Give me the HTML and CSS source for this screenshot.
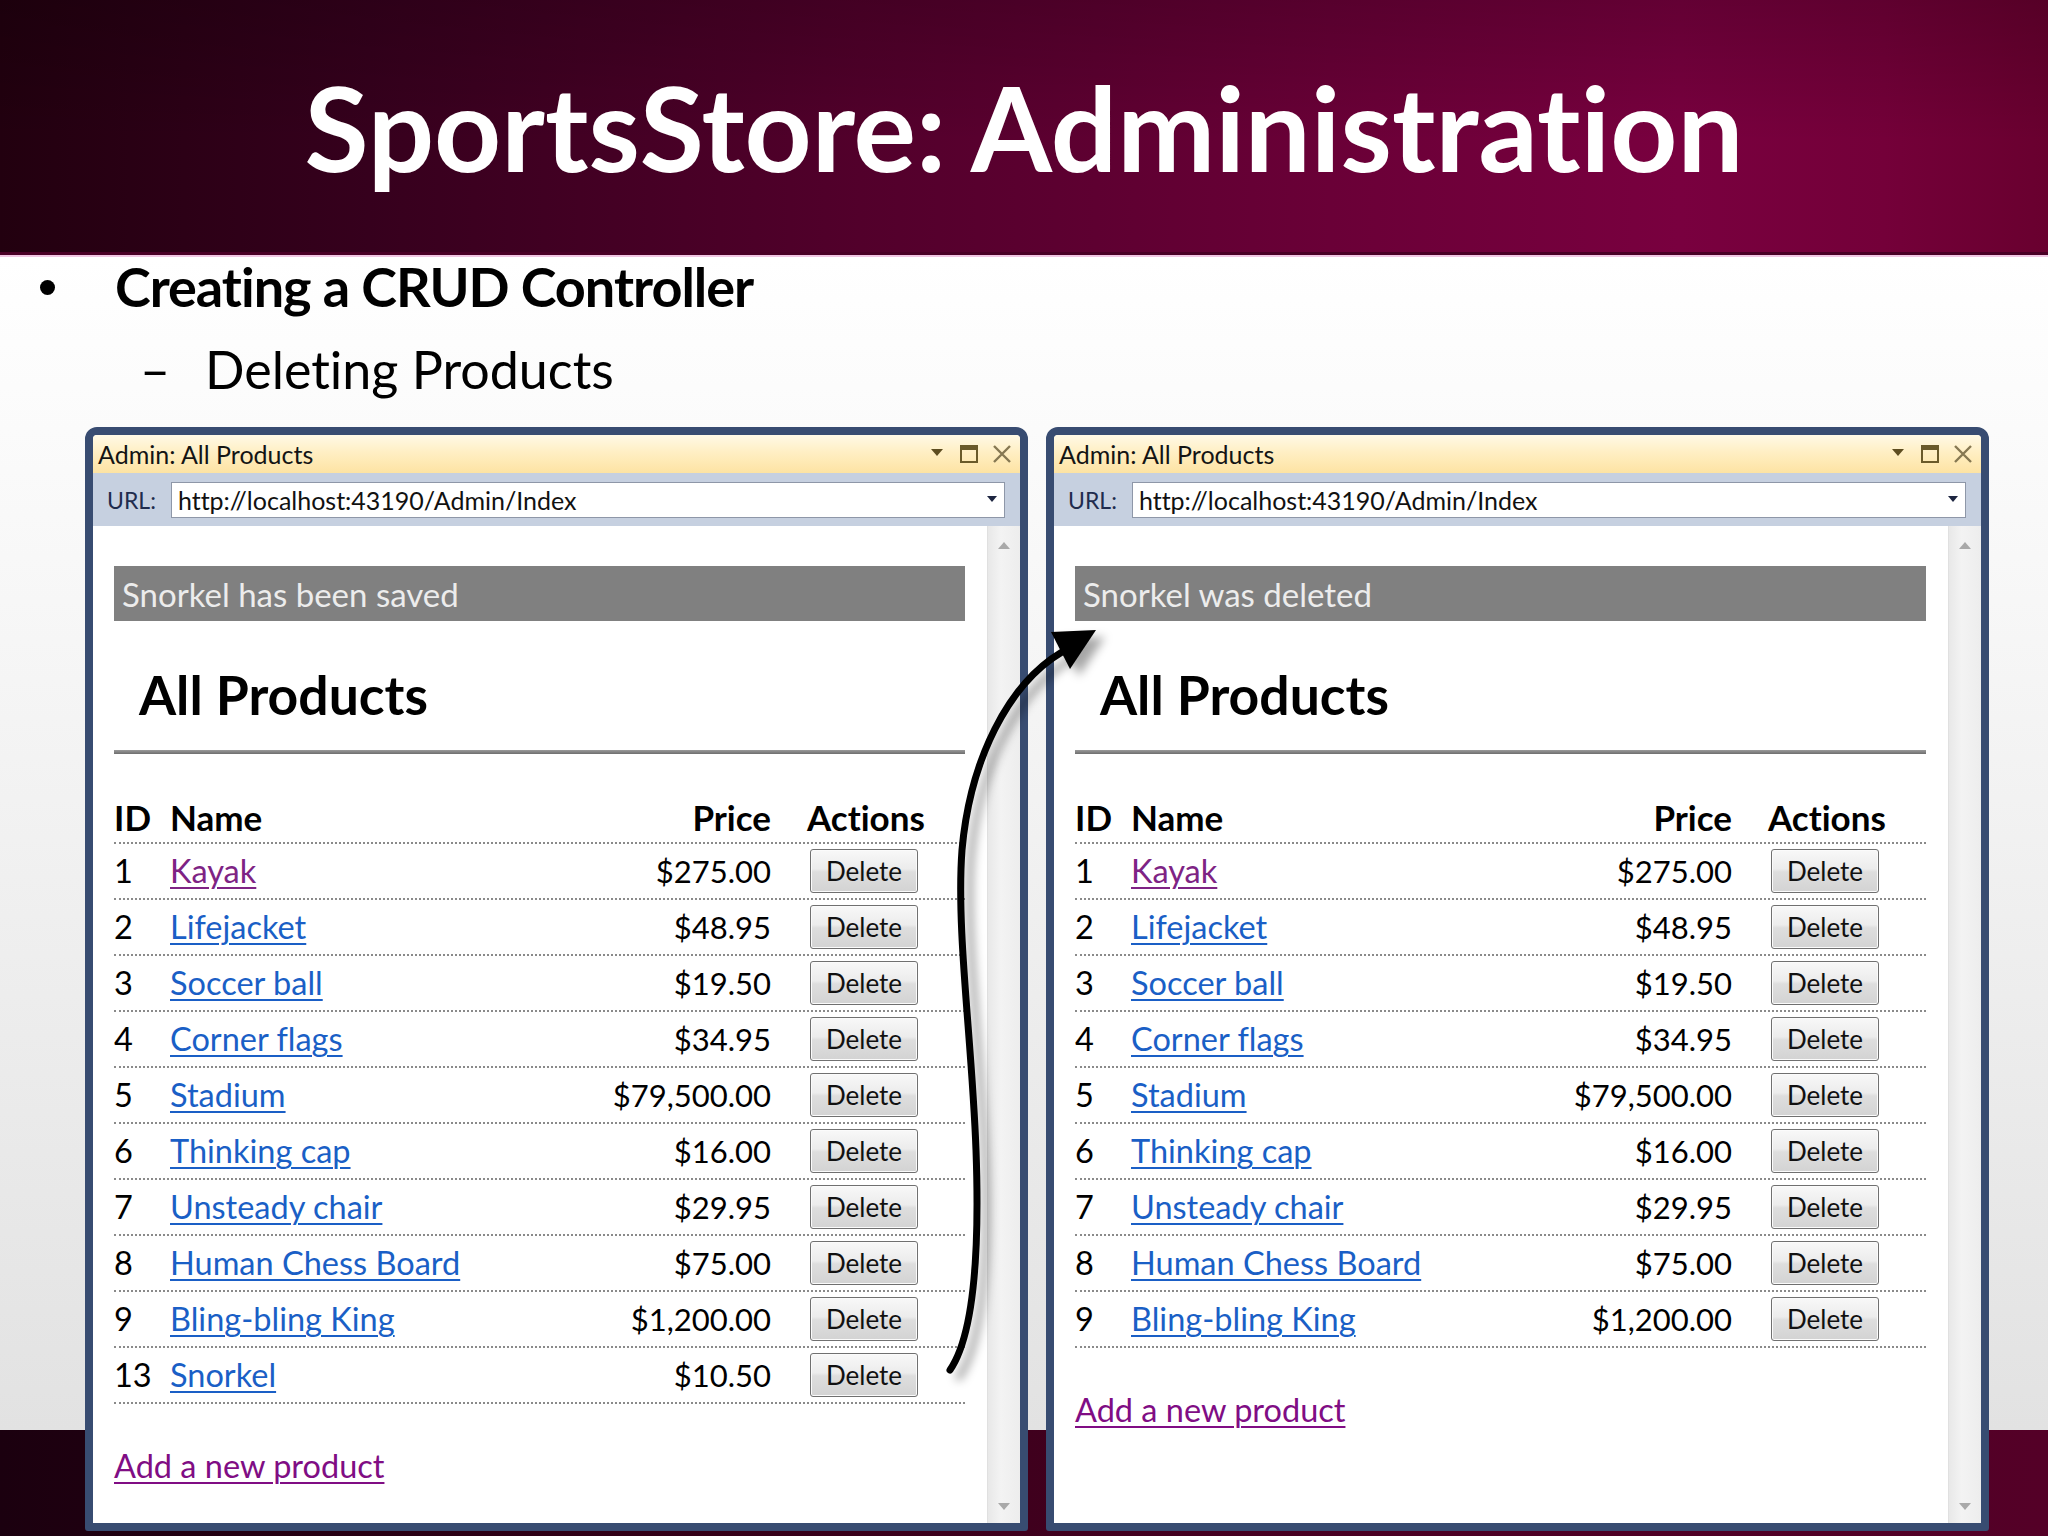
FILE: index.html
```html
<!DOCTYPE html>
<html lang="en">
<head>
<meta charset="utf-8">
<title>SportsStore: Administration</title>
<link rel="stylesheet" href="styles.css">
</head>
<body>
<header class="header"><h1 class="title">SportsStore: Administration</h1></header>

<div class="bullets">
  <div class="b1"><span class="dot"></span><span>Creating a CRUD Controller</span></div>
  <div class="b2"><span class="dash">–</span><span>Deleting Products</span></div>
</div>

<div class="windows">
  <section class="window">
    <div class="titlebar">
      <span class="wtitle">Admin: All Products</span>
      <span class="wicons">
        <svg class="ic-down" width="12" height="8" viewBox="0 0 12 8"><polygon points="0,0 12,0 6,7" fill="#5e4d20"/></svg>
        <svg class="ic-max" width="18" height="18" viewBox="0 0 18 18"><rect x="1" y="1" width="16" height="16" fill="none" stroke="#6a5a2a" stroke-width="2"/><rect x="1" y="1" width="16" height="4" fill="#6a5a2a"/></svg>
        <svg class="ic-close" width="20" height="18" viewBox="0 0 20 18"><path d="M2 1 L18 17 M18 1 L2 17" stroke="#867852" stroke-width="2.4" fill="none"/></svg>
      </span>
    </div>
    <div class="urlbar">
      <span class="urllabel">URL:</span>
      <div class="urlbox"><span class="urltext">http://localhost:43190/Admin/Index</span><svg width="10" height="7" viewBox="0 0 10 7"><polygon points="0,0 10,0 5,6" fill="#1d2541"/></svg></div>
    </div>
    <div class="viewport">
      <div class="page">
        <div class="msg">Snorkel has been saved</div>
        <h2 class="ptitle">All Products</h2>
        <div class="rule"></div>
        <div class="grid">
          <div class="tr th"><span>ID</span><span>Name</span><span class="num">Price</span><span class="act">Actions</span></div>
          <div class="tr"><span>1</span><span><a class="lnk visited" href="#">Kayak</a></span><span class="num">$275.00</span><span><button class="del">Delete</button></span></div>
          <div class="tr"><span>2</span><span><a class="lnk" href="#">Lifejacket</a></span><span class="num">$48.95</span><span><button class="del">Delete</button></span></div>
          <div class="tr"><span>3</span><span><a class="lnk" href="#">Soccer ball</a></span><span class="num">$19.50</span><span><button class="del">Delete</button></span></div>
          <div class="tr"><span>4</span><span><a class="lnk" href="#">Corner flags</a></span><span class="num">$34.95</span><span><button class="del">Delete</button></span></div>
          <div class="tr"><span>5</span><span><a class="lnk" href="#">Stadium</a></span><span class="num">$79,500.00</span><span><button class="del">Delete</button></span></div>
          <div class="tr"><span>6</span><span><a class="lnk" href="#">Thinking cap</a></span><span class="num">$16.00</span><span><button class="del">Delete</button></span></div>
          <div class="tr"><span>7</span><span><a class="lnk" href="#">Unsteady chair</a></span><span class="num">$29.95</span><span><button class="del">Delete</button></span></div>
          <div class="tr"><span>8</span><span><a class="lnk" href="#">Human Chess Board</a></span><span class="num">$75.00</span><span><button class="del">Delete</button></span></div>
          <div class="tr"><span>9</span><span><a class="lnk" href="#">Bling-bling King</a></span><span class="num">$1,200.00</span><span><button class="del">Delete</button></span></div>
          <div class="tr"><span>13</span><span><a class="lnk" href="#">Snorkel</a></span><span class="num">$10.50</span><span><button class="del">Delete</button></span></div>
        </div>
        <a class="addlink" href="#">Add a new product</a>
      </div>
      <div class="scrollbar">
        <svg width="12" height="7" viewBox="0 0 12 7"><polygon points="0,7 12,7 6,0" fill="#a9a9a9"/></svg>
        <svg width="12" height="7" viewBox="0 0 12 7"><polygon points="0,0 12,0 6,7" fill="#a9a9a9"/></svg>
      </div>
    </div>
  </section>

  <section class="window">
    <div class="titlebar">
      <span class="wtitle">Admin: All Products</span>
      <span class="wicons">
        <svg class="ic-down" width="12" height="8" viewBox="0 0 12 8"><polygon points="0,0 12,0 6,7" fill="#5e4d20"/></svg>
        <svg class="ic-max" width="18" height="18" viewBox="0 0 18 18"><rect x="1" y="1" width="16" height="16" fill="none" stroke="#6a5a2a" stroke-width="2"/><rect x="1" y="1" width="16" height="4" fill="#6a5a2a"/></svg>
        <svg class="ic-close" width="20" height="18" viewBox="0 0 20 18"><path d="M2 1 L18 17 M18 1 L2 17" stroke="#867852" stroke-width="2.4" fill="none"/></svg>
      </span>
    </div>
    <div class="urlbar">
      <span class="urllabel">URL:</span>
      <div class="urlbox"><span class="urltext">http://localhost:43190/Admin/Index</span><svg width="10" height="7" viewBox="0 0 10 7"><polygon points="0,0 10,0 5,6" fill="#1d2541"/></svg></div>
    </div>
    <div class="viewport">
      <div class="page">
        <div class="msg">Snorkel was deleted</div>
        <h2 class="ptitle">All Products</h2>
        <div class="rule"></div>
        <div class="grid">
          <div class="tr th"><span>ID</span><span>Name</span><span class="num">Price</span><span class="act">Actions</span></div>
          <div class="tr"><span>1</span><span><a class="lnk visited" href="#">Kayak</a></span><span class="num">$275.00</span><span><button class="del">Delete</button></span></div>
          <div class="tr"><span>2</span><span><a class="lnk" href="#">Lifejacket</a></span><span class="num">$48.95</span><span><button class="del">Delete</button></span></div>
          <div class="tr"><span>3</span><span><a class="lnk" href="#">Soccer ball</a></span><span class="num">$19.50</span><span><button class="del">Delete</button></span></div>
          <div class="tr"><span>4</span><span><a class="lnk" href="#">Corner flags</a></span><span class="num">$34.95</span><span><button class="del">Delete</button></span></div>
          <div class="tr"><span>5</span><span><a class="lnk" href="#">Stadium</a></span><span class="num">$79,500.00</span><span><button class="del">Delete</button></span></div>
          <div class="tr"><span>6</span><span><a class="lnk" href="#">Thinking cap</a></span><span class="num">$16.00</span><span><button class="del">Delete</button></span></div>
          <div class="tr"><span>7</span><span><a class="lnk" href="#">Unsteady chair</a></span><span class="num">$29.95</span><span><button class="del">Delete</button></span></div>
          <div class="tr"><span>8</span><span><a class="lnk" href="#">Human Chess Board</a></span><span class="num">$75.00</span><span><button class="del">Delete</button></span></div>
          <div class="tr"><span>9</span><span><a class="lnk" href="#">Bling-bling King</a></span><span class="num">$1,200.00</span><span><button class="del">Delete</button></span></div>
        </div>
        <a class="addlink" href="#">Add a new product</a>
      </div>
      <div class="scrollbar">
        <svg width="12" height="7" viewBox="0 0 12 7"><polygon points="0,7 12,7 6,0" fill="#a9a9a9"/></svg>
        <svg width="12" height="7" viewBox="0 0 12 7"><polygon points="0,0 12,0 6,7" fill="#a9a9a9"/></svg>
      </div>
    </div>
  </section>
</div>

<svg class="arrow" width="2048" height="1536" viewBox="0 0 2048 1536">
  <defs>
    <filter id="shadow" x="-50%" y="-10%" width="200%" height="120%">
      <feDropShadow dx="9" dy="7" stdDeviation="5" flood-color="#000" flood-opacity="0.35"/>
    </filter>
  </defs>
  <g filter="url(#shadow)">
    <path d="M950 1370 C972 1338, 980 1260, 976 1150 C972 1040, 956 930, 962 850 C970 760, 1008 684, 1062 652" fill="none" stroke="#000" stroke-width="7" stroke-linecap="round"/>
    <polygon points="1096,630 1051,632 1070,669" fill="#000"/>
  </g>
</svg>
</body>
</html>
```

FILE: styles.css
```css
* { box-sizing: border-box; }
html, body { margin: 0; padding: 0; }

body {
  width: 2048px;
  height: 1536px;
  overflow: hidden;
  position: relative;
  font-family: Lato, "Open Sans", "Liberation Sans", sans-serif;
  font-variant-ligatures: none;
  color: #000;
  background:
    linear-gradient(to right, #1b000f 0%, #350018 35%, #4c0024 70%, #540027 100%) left bottom / 100% 106px no-repeat,
    linear-gradient(#ffffff 257px, #f7f7f7 600px, #e2e2e2 1430px);
}

/* ---------- slide header ---------- */
.header {
  height: 257px;
  display: flex;
  align-items: center;
  justify-content: center;
  border-bottom: 2px solid #f1c6e3;
  box-shadow: inset 0 -3px 0 #4a0026;
  background:
    linear-gradient(to bottom, rgba(0,0,0,0.18), rgba(0,0,0,0) 55%),
    linear-gradient(to right, #22000f 0%, #36001d 18%, #52002b 42%, #6a0037 65%, #79003f 82%, #740039 92%, #69002f 100%);
}
.title {
  margin: 0;
  color: #fff;
  font: 700 117px/1.2 Lato, "Open Sans", sans-serif;
  font-variant-ligatures: none;
}

/* ---------- bullets ---------- */
.b1 {
  display: flex;
  align-items: center;
  height: 60px;
  font: 700 54px/60px Lato, sans-serif;
  font-variant-ligatures: none;
  letter-spacing: -1px;
}
.dot {
  width: 15px;
  height: 15px;
  border-radius: 50%;
  background: #000;
  margin-left: 40px;
  margin-right: 60px;
}
.b2 {
  display: flex;
  height: 60px;
  margin-top: 22px;
  padding-left: 140px;
  font: 400 52px/60px Lato, sans-serif;
  font-variant-ligatures: none;
}
.dash { width: 65px; }

/* ---------- windows ---------- */
.windows {
  display: flex;
  gap: 18px;
  padding-left: 85px;
  margin-top: 28px;
}
.window {
  width: 943px;
  height: 1104px;
  border: 8px solid #384c71;
  border-radius: 12px 12px 3px 3px;
  background: #fff;
  display: flex;
  flex-direction: column;
  overflow: hidden;
}
.titlebar {
  flex: none;
  height: 38px;
  display: flex;
  align-items: center;
  padding: 0 8px 0 5px;
  background: linear-gradient(#fff9e6, #ffefc4 45%, #fde3a3);
}
.wtitle {
  flex: 1;
  font-size: 25px;
  color: #141414;
}
.wicons {
  display: flex;
  align-items: center;
}
.ic-down { margin-bottom: 3px; }
.ic-max { margin-left: 17px; }
.ic-close { margin-left: 14px; }

.urlbar {
  flex: none;
  height: 53px;
  display: flex;
  align-items: center;
  padding: 0 15px 0 14px;
  background: #c6d0e0;
}
.urllabel {
  font-size: 23px;
  color: #1f2c4e;
  margin-right: 15px;
}
.urlbox {
  flex: 1;
  height: 36px;
  display: flex;
  align-items: center;
  justify-content: space-between;
  padding: 0 7px 0 6px;
  background: #fff;
  border: 1px solid #8e97a8;
  font-size: 25px;
  color: #111;
}

.viewport {
  flex: 1;
  display: flex;
  min-height: 0;
}
.page {
  flex: 1;
  padding: 40px 22px 0 21px;
}
.scrollbar {
  width: 33px;
  flex: none;
  display: flex;
  flex-direction: column;
  justify-content: space-between;
  align-items: center;
  padding: 16px 0 13px;
  background: linear-gradient(to right, #e8e8e8, #f3f3f3 40%, #ededed);
  border-left: 1px solid #e0e0e0;
}

.msg {
  height: 55px;
  display: flex;
  align-items: center;
  padding-left: 8px;
  background: #808080;
  color: #ececec;
  font-size: 33px;
}
.ptitle {
  margin: 43px 0 0 25px;
  font: 700 53.5px/60px Lato, sans-serif;
  font-variant-ligatures: none;
  color: #000;
}
.rule {
  height: 4px;
  margin-top: 26px;
  background: linear-gradient(#9a9a9a, #6e6e6e);
}

.tr {
  display: grid;
  grid-template-columns: 56px 1fr 190px 194px;
  height: 56px;
  align-items: center;
  border-bottom: 2px dotted #8a8a8a;
  font-size: 32.5px;
  line-height: 36px;
  color: #000;
}
.tr.th {
  height: 90px;
  align-items: end;
  padding-bottom: 7px;
  font-weight: 700;
  font-size: 35px;
}
.num { text-align: right; font-size: 31px; white-space: nowrap; }
.th .num { font-size: 35px; }
.act { padding-left: 36px; }

.lnk {
  color: #1a5fc6;
  text-decoration: underline;
  text-decoration-thickness: 2px;
  text-underline-offset: 4px;
}
.lnk.visited { color: #7e2384; }

.del {
  width: 108px;
  height: 44px;
  margin-left: 39px;
  padding: 0;
  font-family: Lato, sans-serif;
  font-size: 26px;
  color: #111;
  border: 1px solid #707070;
  border-radius: 3px;
  background: linear-gradient(#f8f8f8, #ececec 45%, #dedede 52%, #d3d3d3);
  box-shadow: inset 0 0 0 1px #fbfbfb;
}

.addlink {
  display: inline-block;
  margin-top: 44px;
  font-size: 32.5px;
  line-height: 36px;
  color: #800d84;
  text-decoration: underline;
  text-decoration-thickness: 2px;
  text-underline-offset: 4px;
}

/* ---------- annotation arrow ---------- */
.arrow {
  position: absolute;
  left: 0;
  top: 0;
  pointer-events: none;
}
```
